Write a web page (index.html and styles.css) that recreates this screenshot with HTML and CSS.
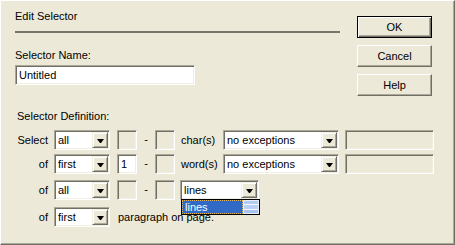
FILE: index.html
```html
<!DOCTYPE html>
<html lang="en">
<head>
    <meta charset="UTF-8">
    <title>Edit Selector</title>
    <link rel="stylesheet" href="styles.css">
</head>
<body>

<div class="dialog">
    <div class="top">
        <div class="head">
            <div class="title">Edit Selector</div>
            <div class="rule"></div>
            <div class="field-label">Selector Name:</div>
            <input class="text-input sunken" type="text" value="Untitled">
        </div>
        <div class="actions">
            <button class="btn default">OK</button>
            <button class="btn">Cancel</button>
            <button class="btn">Help</button>
        </div>
    </div>

    <div class="def-label">Selector Definition:</div>

    <div class="defs">
        <!-- row 1 -->
        <span class="lbl">Select</span>
        <div class="combo sunken small"><span class="combo-value">all</span><span class="combo-btn"></span></div>
        <div class="box sunken"></div>
        <span class="dash">-</span>
        <div class="box sunken"></div>
        <span class="unit">char(s)</span>
        <div class="combo sunken large"><span class="combo-value">no exceptions</span><span class="combo-btn"></span></div>
        <div class="box sunken wide"></div>

        <!-- row 2 -->
        <span class="lbl">of</span>
        <div class="combo sunken small"><span class="combo-value">first</span><span class="combo-btn"></span></div>
        <div class="box sunken filled">1</div>
        <span class="dash">-</span>
        <div class="box sunken"></div>
        <span class="unit">word(s)</span>
        <div class="combo sunken large"><span class="combo-value">no exceptions</span><span class="combo-btn"></span></div>
        <div class="box sunken wide"></div>

        <!-- row 3 -->
        <span class="lbl">of</span>
        <div class="combo sunken small"><span class="combo-value">all</span><span class="combo-btn"></span></div>
        <div class="box sunken"></div>
        <span class="dash">-</span>
        <div class="box sunken"></div>
        <div class="combo sunken lines">
            <span class="combo-value">lines</span><span class="combo-btn"></span>
            <div class="dropdown">
                <span class="dropdown-item">lines</span>
                <span class="dropdown-thumb"></span>
            </div>
        </div>

        <!-- row 4 -->
        <span class="lbl">of</span>
        <div class="combo sunken small"><span class="combo-value">first</span><span class="combo-btn"></span></div>
        <span class="tail">paragraph on page.</span>
    </div>
</div>

</body>
</html>
```

FILE: styles.css
```css
body {
    margin: 0;
}
.dialog {
    width: 455px;
    height: 245px;
    box-sizing: border-box;
    background: #ece9d8;
    border: 1px solid;
    border-color: #fff #716f64 #716f64 #fff;
    box-shadow: inset -1px -1px #aca899;
    padding: 9px 0 0 14px;
    font: 11px "Liberation Sans", Arial, sans-serif;
    color: #000;
}
.top {
    display: flex;
}
.head {
    width: 325px;
}
.title {
    line-height: 13px;
}
.rule {
    height: 2px;
    margin-top: 8px;
    background: #77756a;
}
.field-label {
    margin-top: 16px;
    line-height: 13px;
}
.sunken {
    box-sizing: border-box;
    border: 1px solid;
    border-color: #aca899 #fff #fff #aca899;
    box-shadow: inset 1px 1px #716f64, inset -1px -1px #f1efe2;
}
.text-input {
    display: block;
    width: 180px;
    height: 20px;
    margin: 3px 0 0;
    padding: 0 0 0 3px;
    background: #fff;
    font: inherit;
    color: #000;
    outline: none;
}
.actions {
    display: flex;
    flex-direction: column;
    gap: 7px;
    margin: 6px 0 0 17px;
}
.btn {
    width: 75px;
    height: 22px;
    padding: 0;
    box-sizing: border-box;
    background: #ece9d8;
    border: 1px solid;
    border-color: #fff #716f64 #716f64 #fff;
    box-shadow: inset -1px -1px #aca899;
    font: inherit;
    color: #000;
}
.btn.default {
    border-color: #000;
    box-shadow: inset 1px 1px #fff, inset -1px -1px #716f64, inset -2px -2px #aca899;
}
.def-label {
    margin-top: 14px;
    padding-left: 2px;
    line-height: 13px;
}
.defs {
    display: grid;
    grid-template-columns: 39px 63px 20px 18px 20px 48px 122px 89px;
    grid-template-rows: 24px 26px 27px 20px;
    align-items: start;
    margin-top: 7px;
}
.lbl {
    grid-column: 1;
    text-align: right;
    padding-right: 6px;
    line-height: 20px;
}
.combo {
    display: flex;
    height: 20px;
    padding: 1px;
}
.combo.small {
    width: 56px;
}
.combo.large {
    width: 116px;
}
.combo.lines {
    grid-column: 6 / 8;
    width: 79px;
    margin-left: 5px;
    position: relative;
}
.combo-value {
    flex: 1;
    background: #fff;
    line-height: 16px;
    padding-left: 2px;
    white-space: nowrap;
    overflow: hidden;
}
.combo-btn {
    width: 16px;
    height: 16px;
    box-sizing: border-box;
    display: flex;
    align-items: center;
    justify-content: center;
    background: #ece9d8;
    border: 1px solid;
    border-color: #f1efe2 #716f64 #716f64 #f1efe2;
    box-shadow: inset 1px 1px #fff, inset -1px -1px #aca899;
}
.combo-btn::after {
    content: "";
    width: 1px;
    border-top: 4px solid #000;
    border-left: 3px solid transparent;
    border-right: 3px solid transparent;
    margin-top: 1px;
}
.box {
    width: 20px;
    height: 20px;
    line-height: 18px;
    padding-left: 3px;
}
.box.filled {
    background: #fff;
}
.box.wide {
    width: 89px;
}
.dash {
    text-align: center;
    line-height: 18px;
}
.unit {
    padding-left: 6px;
    line-height: 20px;
}
.tail {
    grid-column: 3 / 9;
    padding-left: 1px;
    line-height: 20px;
}
.dropdown {
    position: absolute;
    top: 100%;
    left: 0;
    width: 79px;
    height: 16px;
    box-sizing: border-box;
    display: flex;
    border: 1px solid #000;
    background: #fff;
    z-index: 2;
}
.dropdown-item {
    flex: 1;
    background: #316ac5;
    color: #fff;
    line-height: 12px;
    padding-left: 2px;
    border: 1px dotted #e8b860;
}
.dropdown-thumb {
    width: 16px;
    box-sizing: border-box;
    border: 1px solid #e6eefc;
    background: linear-gradient(#b4cbf4 0 3px, #f4f8ff 3px 4px, #b9cff6 4px 8px, #f4f8ff 8px 9px, #aac3f0 9px);
}
```
